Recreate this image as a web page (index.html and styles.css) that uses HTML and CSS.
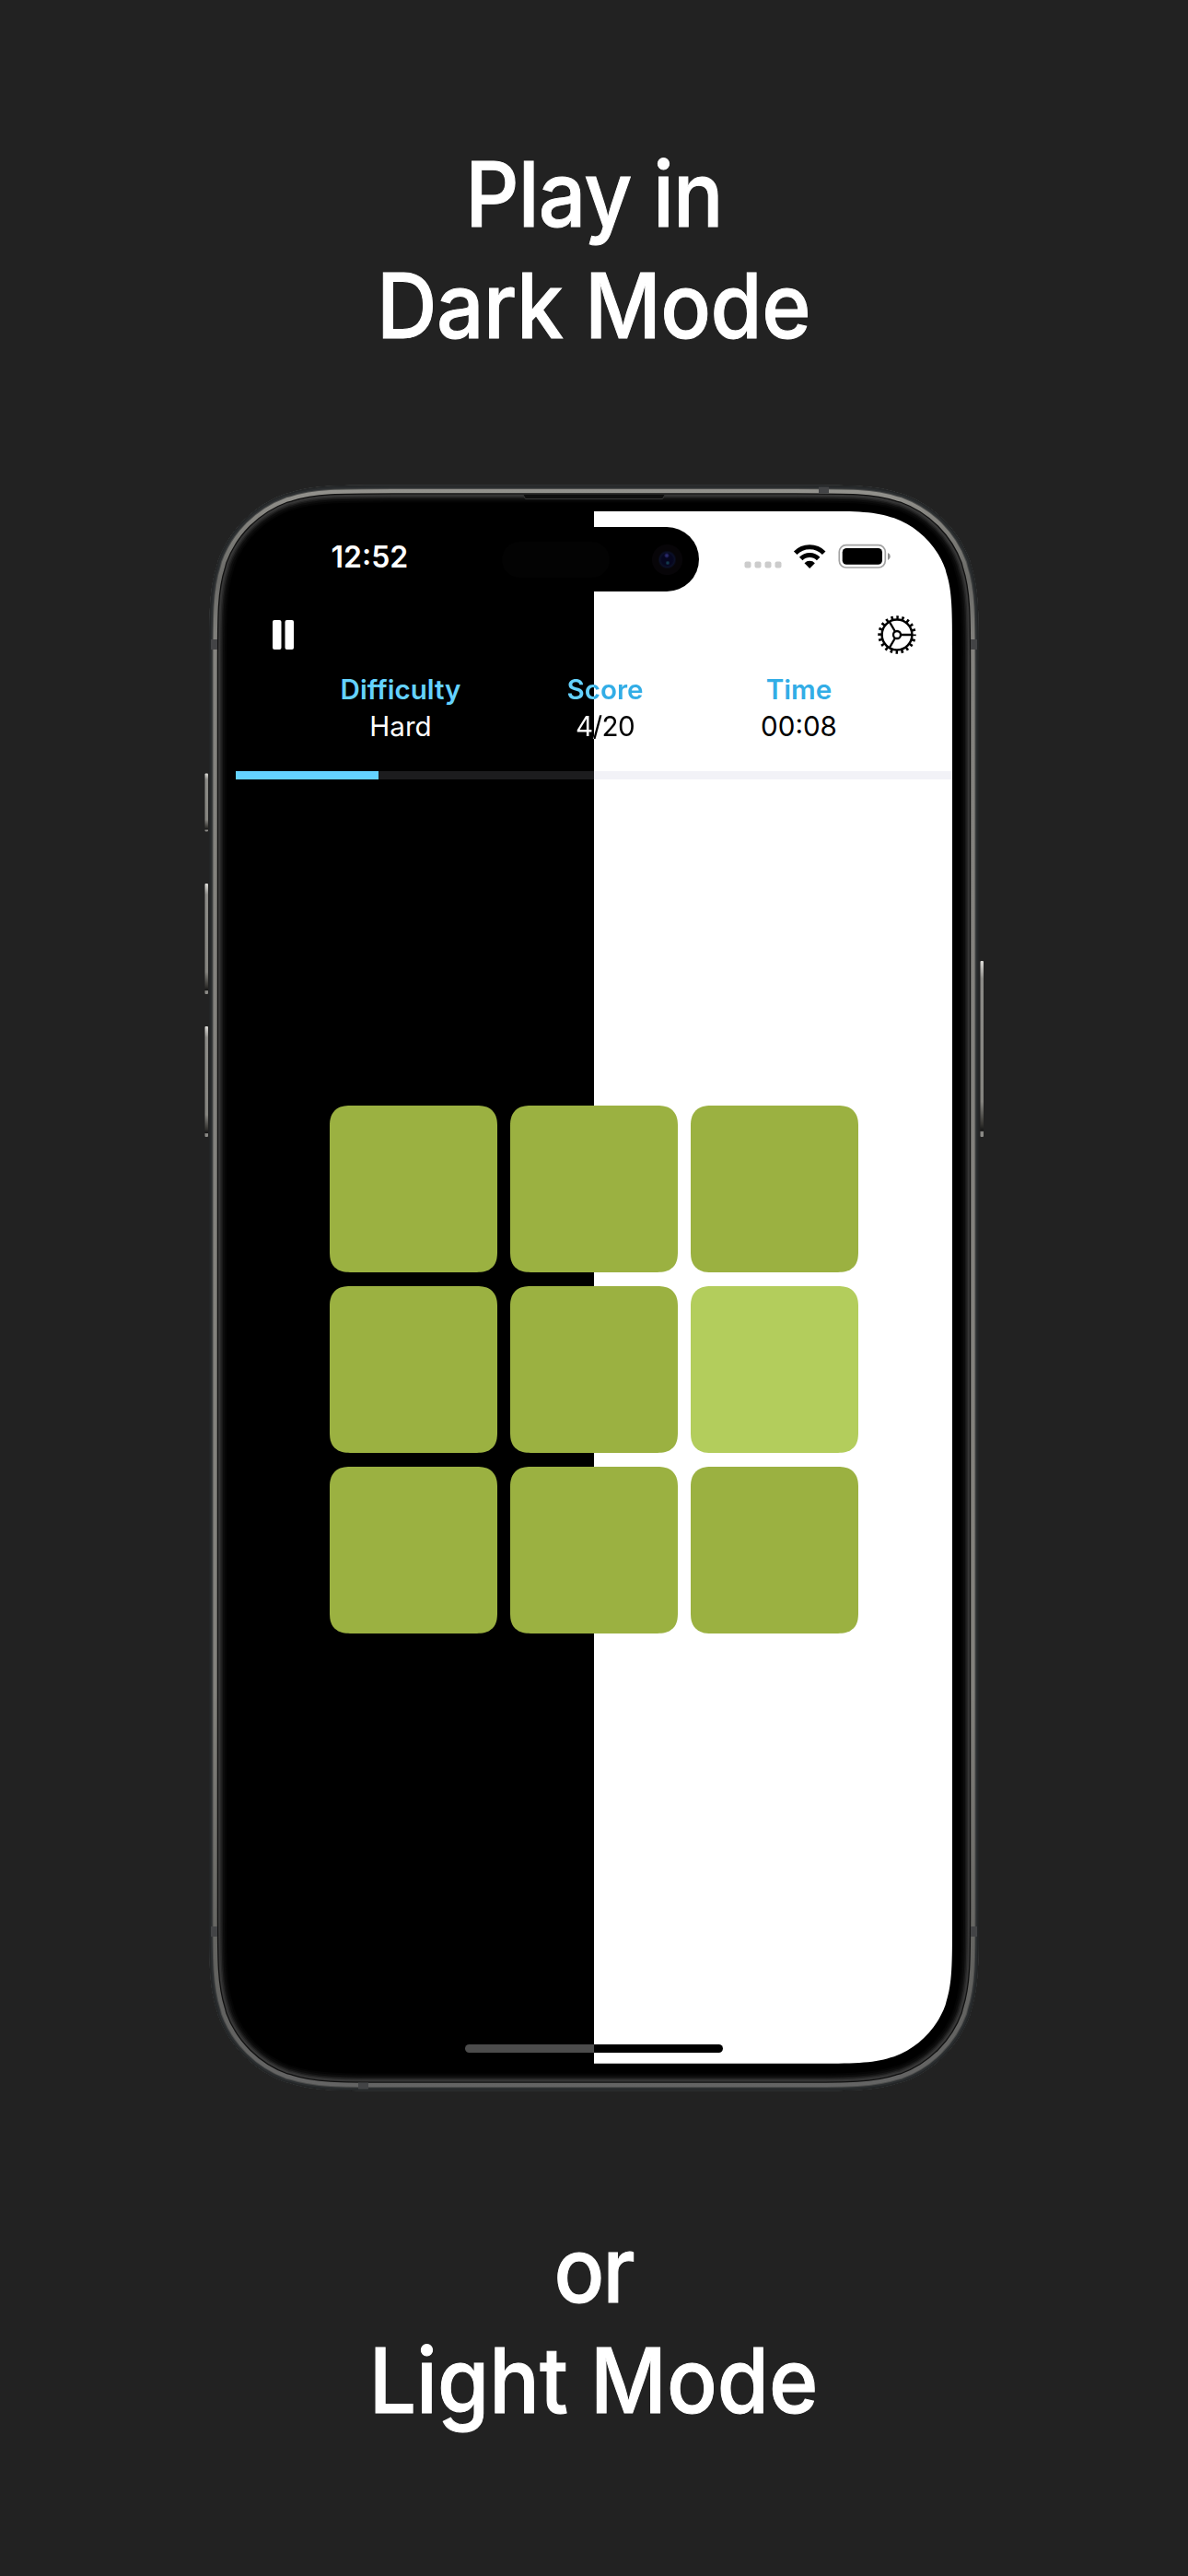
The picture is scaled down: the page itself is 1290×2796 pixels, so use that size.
FILE: index.html
```
<!DOCTYPE html>
<html lang="en">
<head>
<meta charset="utf-8">
<title>Play in Dark Mode or Light Mode</title>
<link rel="stylesheet" href="styles.css">
</head>
<body>
<main class="poster">
  <h1 class="headline headline-top">
    <span class="line line-play">Play in</span>
    <span class="line line-dark">Dark Mode</span>
  </h1>

  <section class="phone">
    <svg class="frame" viewBox="0 0 860 1760" aria-hidden="true">
      <defs>
        <path id="body" d="M210.700 9.500H649.300C706.500 9.500 735.100 9.500 760.900 18L765.900 19.200C799.500 31.500 826 58 838.300 91.600L839.500 96.600C848 122.400 848 151 848 208.200V1553.800C848 1611 848 1639.600 839.500 1665.400L838.300 1670.400C826 1704 799.500 1730.500 765.900 1742.800L760.900 1744C735.100 1752.500 706.500 1752.500 649.300 1752.500H210.700C153.500 1752.500 124.900 1752.500 99.100 1744L94.100 1742.800C60.500 1730.500 34 1704 21.700 1670.400L20.500 1665.400C12 1639.600 12 1611 12 1553.800V208.200C12 151 12 122.400 20.500 96.600L21.700 91.600C34 58 60.500 31.500 94.100 19.200L99.100 18C124.900 9.500 153.500 9.500 210.700 9.500Z"/>
        <clipPath id="inside"><use href="#body"/></clipPath>
        <linearGradient id="metal" gradientUnits="userSpaceOnUse" x1="0" y1="9" x2="0" y2="1753">
          <stop offset="0" stop-color="#969590"/>
          <stop offset=".02" stop-color="#85847f"/>
          <stop offset=".06" stop-color="#6a6a67"/>
          <stop offset=".1" stop-color="#83827e"/>
          <stop offset=".75" stop-color="#82817c"/>
          <stop offset=".92" stop-color="#62625f"/>
          <stop offset="1" stop-color="#646464"/>
        </linearGradient>
        <linearGradient id="button" x1="0" y1="0" x2="0" y2="1">
          <stop offset="0" stop-color="#dddcd8"/>
          <stop offset=".1" stop-color="#8c8b87"/>
          <stop offset=".8" stop-color="#85847f"/>
          <stop offset=".93" stop-color="#33322f"/>
          <stop offset=".965" stop-color="#161616"/>
          <stop offset=".972" stop-color="#8b8a86"/>
          <stop offset="1" stop-color="#8b8a86"/>
        </linearGradient>
      </defs>
      <g fill="url(#button)">
        <rect x="7.500" y="322.500" width="3.500" height="63" rx="1"/>
        <rect x="7.500" y="442" width="3.500" height="120" rx="1"/>
        <rect x="7.500" y="597" width="3.500" height="120" rx="1"/>
        <rect x="849.500" y="526" width="3.500" height="191" rx="1"/>
      </g>
      <g clip-path="url(#inside)" fill="none">
        <use href="#body" fill="#000"/>
        <use href="#body" stroke="#050505" stroke-width="38"/>
        <use href="#body" stroke="#0c0c0c" stroke-width="34"/>
        <use href="#body" stroke="#181818" stroke-width="30"/>
        <use href="#body" stroke="#282828" stroke-width="27"/>
        <use href="#body" stroke="#363636" stroke-width="24"/>
        <use href="#body" stroke="#101010" stroke-width="20"/>
        <use href="#body" stroke="url(#metal)" stroke-width="17.500"/>
        <use href="#body" stroke="#4c4d4c" stroke-width="9"/>
        <use href="#body" stroke="#2b2e30" stroke-width="7"/>
        <use href="#body" stroke="#232526" stroke-width="3"/>
        <g fill="#434446">
          <rect x="14" y="177" width="7" height="11"/>
          <rect x="839" y="177" width="7" height="11"/>
          <rect x="14" y="1574" width="7" height="11"/>
          <rect x="839" y="1574" width="7" height="11"/>
          <rect x="674" y="11.500" width="11" height="7"/>
          <rect x="174" y="1743.500" width="11" height="7"/>
        </g>
      </g>
      <path d="M353 20H507L504.500 24.500H355.500Z" fill="#0e0e0e"/>
      <path d="M353 20L355.500 24.500H504.500L507 20" fill="none" stroke="#343434"/>
    </svg>

    <div class="screen">
      <div class="status">
        <span class="clock">12:52</span>
        <svg class="signals" viewBox="0 0 160 30" aria-hidden="true">
          <g fill="#ccc">
            <rect x="0.500" y="20.500" width="7" height="7" rx="2"/>
            <rect x="11.500" y="20.500" width="7" height="7" rx="2"/>
            <rect x="22.500" y="20.500" width="7" height="7" rx="2"/>
            <rect x="33.500" y="20.500" width="7" height="7" rx="2"/>
          </g>
          <g fill="none" stroke="#000" stroke-width="5">
            <path d="M55.700 11.300A21.900 21.900 0 0 1 86.700 11.300"/>
            <path d="M61.700 17.400A13.400 13.400 0 0 1 80.700 17.400"/>
          </g>
          <path d="M65.500 22.200A8 8 0 0 1 76.900 22.200L71.200 27.900Z"/>
          <rect x="103.300" y="2.600" width="50" height="24.400" rx="7.500" fill="none" stroke="#a3a3a3" stroke-width="1.700"/>
          <rect x="106.700" y="6" width="43.300" height="17.700" rx="4.500"/>
          <path d="M156 11Q158.800 12.300 158.800 14.900T156 19Z" fill="#8f8f8f"/>
        </svg>
      </div>

      <div class="toolbar">
        <svg class="pause" viewBox="0 0 23 32" aria-label="Pause"><rect width="9.500" height="32" rx="2"/><rect x="13.500" width="9.500" height="32" rx="2"/></svg>
        <svg class="gear" viewBox="-22 -22 44 44" aria-label="Settings">
          <circle r="18.600" fill="none" stroke="#000" stroke-width="4.200" stroke-dasharray="2.500 3.344" stroke-dashoffset="1.250"/>
          <g fill="none" stroke="#000" stroke-width="2.300">
            <circle r="16.400" stroke-width="2.500"/>
            <circle r="4"/>
            <path d="M4 0H17M-2 3.460L-8.500 14.700M-2 -3.460L-8.500 -14.700"/>
          </g>
        </svg>
      </div>

      <dl class="stats">
        <div class="stat stat-dark"><dt>Difficulty</dt><dd>Hard</dd></div>
        <div class="stat stat-split"><dt>Score</dt><dd>4/20</dd></div>
        <div class="stat stat-light"><dt>Time</dt><dd>00:08</dd></div>
      </dl>

      <div class="progress"><div class="progress-value" style="width:155px"></div></div>

      <div class="board">
        <i class="tile"></i><i class="tile"></i><i class="tile"></i>
        <i class="tile"></i><i class="tile"></i><i class="tile tile-lit"></i>
        <i class="tile"></i><i class="tile"></i><i class="tile"></i>
      </div>

      <div class="home-bar"></div>
      <div class="island"><span class="sensor"></span><span class="camera"></span></div>
    </div>
  </section>

  <h2 class="headline headline-bottom">
    <span class="line line-or">or</span>
    <span class="line line-light">Light Mode</span>
  </h2>
</main>
</body>
</html>
```
FILE: styles.css
```
* { box-sizing: border-box; }

body {
  margin: 0;
  background: #222;
  font-family: Inter, "Liberation Sans", sans-serif;
}

.poster {
  display: flex;
  flex-direction: column;
  align-items: center;
  width: 1290px;
  height: 2796px;
  overflow: hidden;
}

.headline {
  display: flex;
  flex-direction: column;
  align-items: center;
  margin: 0;
  color: #fff;
  font-size: 98.2px;
  font-weight: 500;
  line-height: 120.6px;
  -webkit-text-stroke: 1px #fff;
}
.headline-top { padding-top: 151px; }
.headline-bottom { padding-top: 127px; }
.line { transform: scaleX(.925); white-space: nowrap; }
.line-play { letter-spacing: -.9px; }
.line-dark { letter-spacing: -.6px; }
.line-or { letter-spacing: -2px; }
.line-light { letter-spacing: 0; }

.phone {
  position: relative;
  width: 860px;
  height: 1760px;
  margin-top: 124.5px;
  padding: 38px 41px;
}
.frame {
  position: absolute;
  inset: 0;
  width: 860px;
  height: 1760px;
}

.screen {
  position: relative;
  display: flex;
  flex-direction: column;
  width: 778px;
  height: 1685px;
  clip-path: path("M152.9 0H625.1C669.2 0 691.2 0 711 6.5L714.9 7.5C740.7 16.9 761.1 37.3 770.5 63.1L771.5 67C778 86.8 778 108.8 778 152.9V1532.1C778 1576.2 778 1598.2 771.5 1618L770.5 1621.9C761.1 1647.7 740.7 1668.1 714.9 1677.5L711 1678.5C691.2 1685 669.2 1685 625.1 1685H152.9C108.8 1685 86.8 1685 67 1678.5L63.1 1677.5C37.3 1668.1 16.9 1647.7 7.5 1621.9L6.5 1618C0 1598.2 0 1576.2 0 1532.1V152.9C0 108.8 0 86.8 6.5 67L7.5 63.1C16.9 37.3 37.3 16.9 63.1 7.5L67 6.5C86.8 0 108.8 0 152.9 0Z");
  background: linear-gradient(90deg, #000 389px, #fff 389px);
}

.status {
  display: flex;
  justify-content: space-between;
  align-items: flex-start;
  height: 101px;
  padding: 34px 66px 0 103.5px;
}
.clock {
  color: #fff;
  font-size: 32px;
  font-weight: 600;
  line-height: 32px;
}
.signals { width: 160px; height: 30px; }

.toolbar {
  display: flex;
  justify-content: space-between;
  align-items: center;
  height: 66px;
  padding: 0 38px 0 40px;
}
.pause { width: 23px; height: 32px; fill: #fff; }
.gear { width: 44px; height: 44px; }

.stats {
  display: grid;
  grid-template-columns: 222px 222px 199px;
  height: 115px;
  margin: 0;
  padding: 6px 0 0 68px;
  font-size: 29.6px;
  line-height: 40px;
  text-align: center;
}
.stat dt { font-weight: 600; }
.stat dd { margin: 0; }
.stat-dark dt { color: #64d2ff; }
.stat-dark dd { color: #fff; }
.stat-light dt { color: #32ade6; }
.stat-split dt,
.stat-split dd {
  color: transparent;
  background-clip: text;
  -webkit-background-clip: text;
}
.stat-split dt { background-image: linear-gradient(90deg, #64d2ff 99px, #32ade6 99px); }
.stat-split dd {
  background-image: linear-gradient(90deg, #fff 99px, #000 99px);
  letter-spacing: -.6px;
}

.progress {
  height: 9px;
  background: linear-gradient(90deg, #1c1c1e 389px, #f2f2f7 389px);
}
.progress-value { height: 9px; background: #64d2ff; }

.board {
  display: grid;
  grid-template-columns: repeat(3, 181.5px);
  grid-auto-rows: 181.5px;
  gap: 14.5px;
  justify-content: center;
  margin-top: 354px;
}
.tile {
  border-radius: 22px;
  corner-shape: superellipse(1.3);
  background: #9bb141;
}
.tile-lit { background: #b3cd5c; }

.home-bar {
  width: 280px;
  height: 9px;
  margin: auto auto 11.5px;
  border-radius: 5px;
  background: linear-gradient(90deg, #4c4c4c 140px, #000 140px);
}

.island {
  position: absolute;
  top: 17px;
  left: 275px;
  display: flex;
  justify-content: space-between;
  align-items: center;
  width: 228px;
  height: 70px;
  padding: 2px 17px 0 14px;
  border-radius: 35px;
  background: #000;
}
.sensor { width: 117px; height: 39px; border-radius: 20px; background: #030303; }
.camera {
  width: 35px;
  height: 35px;
  border-radius: 50%;
  background:
    radial-gradient(circle at 17px 13px, #2a2a6c 0 1px, transparent 3px),
    radial-gradient(circle at 18px 21px, #12394c 0 1px, transparent 2.5px),
    radial-gradient(circle, #06061f 0 6px, #0b1028 8px, #070508 10px 16px, #000 17px);
}
```
